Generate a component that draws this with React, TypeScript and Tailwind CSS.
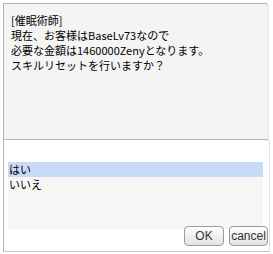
import React from "react";

const lines = [
  "[催眠術師]",
  "現在、お客様はBaseLv73なので",
  "必要な金額は1460000Zenyとなります。",
  "スキルリセットを行いますか？",
];

const App: React.FC = () => {
  return (
    <div className="w-[273px] h-[254px] bg-white pt-[3px] pl-[3px] font-['Noto_Sans_CJK_JP',sans-serif]">
      <div className="w-[266px] h-[136px] bg-[#f4f4f4] border-l border-t border-[#b4b4b4] border-r border-r-[#e6e6e6] rounded-tr-[4px] pl-[7px] pt-[9px] text-[11px] leading-[15px] text-black">
        {lines.map((l) => (
          <div key={l} className="whitespace-nowrap">
            {l}
          </div>
        ))}
      </div>
      <div className="w-[267px] h-[113px] bg-white border-l border-t border-[#b4b4b4] border-r border-r-[#e0e0e0] border-b border-b-[#c8c8c8] rounded-tr-[4px] pt-[22px] pl-[4px] flex flex-col">
        <div className="w-[255px] h-[67px] bg-[#f7f5f5] text-[11px] leading-[15px] text-black">
          <div className="bg-[#c9d9f8] h-[15px] pl-[1px]">はい</div>
          <div className="h-[15px] pl-[1px]">いいえ</div>
        </div>
        <div className="flex justify-end gap-[5px] pr-[1px] mt-[-3px] font-['Liberation_Sans',sans-serif]">
          <button className="w-[40px] h-[20px] rounded-[4px] border border-[#9a9a9a] bg-gradient-to-b from-white to-[#e4e4e4] text-[12px] leading-[18px] text-[#333]">
            OK
          </button>
          <button className="w-[39px] h-[20px] rounded-[4px] border border-[#9a9a9a] bg-gradient-to-b from-white to-[#e4e4e4] text-[12px] leading-[18px] text-[#333]">
            cancel
          </button>
        </div>
      </div>
    </div>
  );
};

export default App;
